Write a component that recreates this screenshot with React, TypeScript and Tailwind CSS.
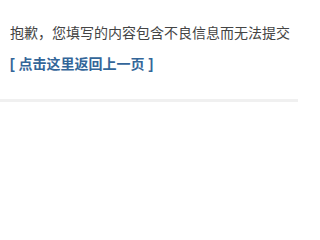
import React from 'react';

const App: React.FC = () => {
  return (
    <div className="w-[298px] h-[230px] bg-white font-['Liberation_Sans','Noto_Sans_CJK_SC',sans-serif] text-[14px]">
      <div className="px-[10px] pt-[19px] pb-[21px]">
        <p className="leading-[28px] text-[#444444] whitespace-nowrap">抱歉，您填写的内容包含不良信息而无法提交</p>
        <p className="mt-[3px] leading-[28px]">
          <a href="#" className="font-bold text-[#336699]">[ 点击这里返回上一页 ]</a>
        </p>
      </div>
      <div className="h-[3px] bg-[#f0f0f0]" />
    </div>
  );
};

export default App;
